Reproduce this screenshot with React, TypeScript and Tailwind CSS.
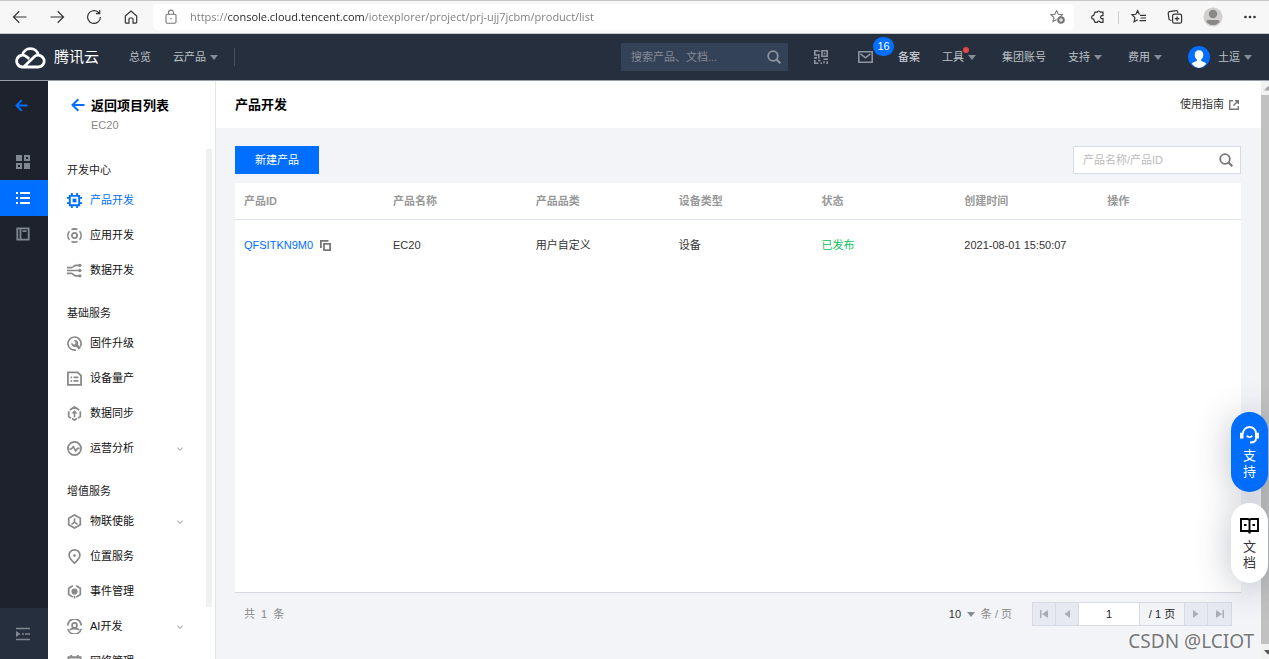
import React, { useState } from 'react';
import type { ReactNode } from 'react';

type IconProps = { className?: string };

const Svg = ({
  children,
  className = 'size-4',
  box = 16,
  width = 1.4,
}: IconProps & { children: ReactNode; box?: number; width?: number }) => (
  <svg
    viewBox={`0 0 ${box} ${box}`}
    className={`shrink-0 ${className}`}
    fill="none"
    stroke="currentColor"
    strokeWidth={width}
    aria-hidden="true"
  >
    {children}
  </svg>
);

const Caret = () => (
  <svg viewBox="0 0 8 5" className="h-[5px] w-2 shrink-0 text-[#868c96]" aria-hidden="true">
    <path d="M0 0h8L4 5z" fill="currentColor" />
  </svg>
);

const BackArrow = ({ className = 'size-[14px]' }: IconProps) => (
  <Svg className={className} box={14} width={2}>
    <path d="M13.5 7H1.8M7.3 1.2 1.5 7l5.8 5.8" />
  </Svg>
);

const SearchIcon = ({ className = 'size-[14px]' }: IconProps) => (
  <Svg className={className} box={14} width={1.8}>
    <circle cx="6" cy="6" r="4.8" />
    <path d="m9.3 9.3 4 4" strokeWidth="2.2" />
  </Svg>
);

/* ---------- browser toolbar ---------- */

const BrowserBar = () => {
  const [url, setUrl] = useState(
    'https://console.cloud.tencent.com/iotexplorer/project/prj-ujj7jcbm/product/list'
  );

  return (
    <div className="flex h-[34px] shrink-0 items-center border-y border-y-[#c8c8c8] bg-[#f7f7f7] pr-3 pl-3 text-[#333]">
      <div className="flex items-center gap-[21px]">
        <button aria-label="Back">
          <Svg width={1.2}>
            <path d="M14.5 8H1.7M7.3 2.3 1.5 8l5.800 5.700" />
          </Svg>
        </button>
        <button aria-label="Forward">
          <Svg width={1.2}>
            <path d="M1.500 8h12.800M8.700 2.300 14.500 8l-5.800 5.700" />
          </Svg>
        </button>
        <button aria-label="Refresh">
          <Svg width={1.2}>
            <path d="M14.400 8A6.400 6.400 0 1 1 12.200 3.200L13.500 4.400M13.700 1v3.600h-3.800" />
          </Svg>
        </button>
        <button aria-label="Home">
          <Svg width={1.2}>
            <path d="M2.300 7 8 2l5.700 5v6.200a.9.9 0 0 1-.9.9H10V10a1 1 0 0 0-1-1H7a1 1 0 0 0-1 1v4.100H3.200a.9.9 0 0 1-.9-.9z" />
          </Svg>
        </button>
      </div>
      <div className="ml-[14px] flex h-[26px] flex-1 items-center rounded-sm bg-white pr-2 pl-[10px] text-[#777]">
        <Svg width={1.1}>
          <rect x="3" y="5.200" width="10" height="9" rx="1.200" />
          <path d="M5.500 5.200V3.600a2.500 2.500 0 0 1 5 0v1.600" />
          <circle cx="8" cy="9.800" r=".8" fill="currentColor" stroke="none" />
        </Svg>
        <input
          aria-label="Address"
          value={url}
          onChange={(e) => setUrl(e.target.value)}
          className="ml-[11px] min-w-0 flex-1 bg-[linear-gradient(90deg,#7a7a7a_38px,#1f1f1f_38px,#1f1f1f_174px,#7a7a7a_174px)] bg-clip-text font-['Open_Sans',sans-serif] text-[11px] text-transparent outline-none"
        />
        <Svg width={1.1}>
          <path d="m6.600 1.500 1.700 3.800 4.100.4-2.600 2.600M4 8.400.9 5.700l4-.4L6.600 1.500M4 8.400l-.9 4 3.500-2" />
          <circle cx="11" cy="11" r="3.800" fill="currentColor" stroke="none" />
          <path d="M11 9v4M9 11h4" stroke="#fff" />
        </Svg>
      </div>
      <div className="ml-4 flex items-center">
        <button aria-label="Extensions">
          <Svg width={1.2}>
            <path d="M5 3.200h2.200a1.600 1.600 0 0 1 3.100 0H13v3.400h-1.200a1.600 1.600 0 0 0 0 3.100H13v3.600h-2.700a1.600 1.600 0 0 0-3.100 0H5l-1.400-3.100a1.900 1.900 0 0 1 0-3.800z" />
          </Svg>
        </button>
        <span className="ml-3 h-[13px] w-px bg-[#ccc]" />
        <button aria-label="Favorites" className="ml-3">
          <Svg width={1.2}>
            <path d="M8.500 5.600 6.600 1.700 4.900 5.300l-4 .5 3 2.800-.8 4.200 3.600-2M9 6.300h6M9.500 9h5.500M8.500 11.700H15" />
          </Svg>
        </button>
        <button aria-label="Collections" className="ml-5">
          <Svg width={1.2}>
            <path d="M4.500 11.500 2.900 11a1.600 1.600 0 0 1-1-2L1.200 4.500a1.600 1.600 0 0 1 1.300-1.800l6.300-1.100a1.600 1.600 0 0 1 1.900 1.300l.2 1" />
            <rect x="5.600" y="5.200" width="9" height="9" rx="1.800" />
            <path d="M10.100 7.400v4.600M7.800 9.700h4.600" />
          </Svg>
        </button>
        <button aria-label="Profile" className="ml-5">
          <Svg className="size-5" box={20}>
            <circle cx="10" cy="10" r="9.600" fill="#d2d0ce" stroke="none" />
            <circle cx="10" cy="7" r="4.200" fill="#8a8886" stroke="none" />
            <path d="M3.400 14.800c0-1.200.8-1.900 1.900-1.900h9.400c1.100 0 1.900.7 1.900 1.900a8.300 8.300 0 0 1-13.200 0z" fill="#8a8886" stroke="none" />
          </Svg>
        </button>
        <button aria-label="Settings" className="ml-5">
          <Svg className="size-[14px]" box={14}>
            <g fill="currentColor" stroke="none">
              <circle cx="2.500" cy="7" r="1.300" />
              <circle cx="7" cy="7" r="1.300" />
              <circle cx="11.500" cy="7" r="1.300" />
            </g>
          </Svg>
        </button>
      </div>
    </div>
  );
};

/* ---------- console header ---------- */

const TopNav = () => (
  <header className="flex h-[46px] shrink-0 items-center bg-[#262f3e] pr-[17px] pl-[15px] text-[#bbc0c6]">
    <a href="#" className="flex items-center gap-2 text-white">
      <svg
        viewBox="0 0 31 24"
        className="h-6 w-[31px]"
        fill="none"
        stroke="currentColor"
        strokeWidth="2.800"
        strokeLinejoin="round"
        aria-hidden="true"
      >
        <path d="M8 22h15.300a5.900 5.900 0 1 0-4.300-10L8.700 22H7.500a5.900 5.900 0 1 1 4-10.300l2.700 2.200M7.400 10.200a8.100 8.100 0 0 1 15.900-.1" />
      </svg>
      <span className="text-[15px]">腾讯云</span>
    </a>
    <nav className="ml-[30px] flex items-center gap-[22px]">
      <a href="#">总览</a>
      <button className="flex items-center gap-1">
        云产品
        <Caret />
      </button>
    </nav>
    <span className="ml-4 h-[18px] w-px bg-[#475060]" />
    <div className="ml-auto flex items-center gap-[22px]">
      <label className="mr-1 flex h-7 w-[167px] items-center bg-[#344258] pr-[7px] pl-[10px] text-[#8d949f]">
        <input
          aria-label="搜索"
          placeholder="搜索产品、文档..."
          className="min-w-0 flex-1 outline-none placeholder:text-[#858b95]"
        />
        <SearchIcon />
      </label>
      <button aria-label="二维码" className="mr-2 text-[#8d949f]">
        <Svg className="size-[14px]" box={14} width={1.6}>
          <path d="M4.500.8H.8V5h3M8 .8h5.200v5.400H8zM10.600 2.700v1.600M0 7.900h3M5.500.8v1M4.800 4v4.500M9.500 9.200H14M.8 10v3.200h3.700M4 10.500h2.500M6.500 13.200h1.500M10 13.200v-2M13.200 11.200V14" />
        </Svg>
      </button>
      <button aria-label="消息" className="relative text-[#8d949f]">
        <svg
          viewBox="0 0 15 12"
          className="h-3 w-[15px]"
          fill="none"
          stroke="currentColor"
          strokeWidth="1.600"
          aria-hidden="true"
        >
          <path d="M.8.800h13.400v10.400H.8zM2.500 2.800l5 4 5-4" />
        </svg>
        <span className="absolute -top-[14px] left-[15px] flex h-[19px] w-[21px] items-center justify-center rounded-full bg-[#006eff] text-[11px] text-white">
          16
        </span>
      </button>
      <a href="#" className="ml-[3px] text-[#d5d8dc]">
        备案
      </a>
      <button className="relative mr-1 flex items-center gap-1">
        工具
        <Caret />
        <span className="absolute -top-[2px] left-[21px] size-[6px] rounded-full bg-[#e54545]" />
      </button>
      <a href="#">集团账号</a>
      <button className="mr-1 flex items-center gap-1">
        支持
        <Caret />
      </button>
      <button className="mr-1 flex items-center gap-1">
        费用
        <Caret />
      </button>
      <button className="flex items-center gap-1">
        <svg viewBox="0 0 22 22" className="mr-1 size-[22px]" aria-hidden="true">
          <circle cx="11" cy="11" r="11" fill="#006eff" />
          <path
            d="M11 4.200c2.800 0 4.300 1.900 4.300 4.500 0 2.200-1 4-2.200 4.800v1.300l4.200 1.900a1.500 1.500 0 0 1 .8 1.200A11 11 0 0 1 11 22a11 11 0 0 1-7.100-4.100 1.500 1.500 0 0 1 .8-1.200l4.200-1.900v-1.300C7.700 12.700 6.700 10.900 6.700 8.700c0-2.600 1.500-4.500 4.300-4.500z"
            fill="#fff"
          />
        </svg>
        土逗
        <Caret />
      </button>
    </div>
  </header>
);

/* ---------- left rail ---------- */

const Rail = () => (
  <aside className="flex w-12 shrink-0 flex-col bg-[#1e222d] text-[#808791]">
    <button aria-label="返回" className="flex h-12 items-center justify-center pr-[5px] text-[#006eff]">
      <BackArrow className="size-[13px]" />
    </button>
    <nav className="mt-[15px] flex flex-1 flex-col">
      <a href="#" aria-label="概览" className="flex h-9 items-center justify-center pr-[2px]">
        <Svg className="size-[14px]" box={14} width={2}>
          <path d="M0 0h6v6H0zM8 8h6v6H8z" fill="currentColor" stroke="none" />
          <path d="M9 1h4v4H9zM1 9h4v4H1z" />
        </Svg>
      </a>
      <a href="#" aria-label="列表" className="flex h-9 items-center justify-center bg-[#006eff] pr-[2px] text-white">
        <Svg className="size-[14px]" box={14} width={1.8}>
          <path d="M0 2h2M4 2h10M0 7h2M4 7h10M0 12h2M4 12h10" />
        </Svg>
      </a>
      <a href="#" aria-label="文档" className="flex h-9 items-center justify-center pr-[2px]">
        <Svg className="size-[14px]" box={14} width={1.8}>
          <path d="M1.300 1.300h11.400v11.400H1.300zM4.500 1v12M6.500 4.200h4" />
        </Svg>
      </a>
    </nav>
    <button aria-label="展开" className="flex h-[51px] items-center justify-center bg-[#262f3e] pr-[2px]">
      <Svg className="size-[14px]" box={14} width={1.6}>
        <path d="M0 1.500h14M6 7h2M9 7h5M0 12.500h14" />
        <path d="M0 4l4.500 3L0 10z" fill="currentColor" stroke="none" />
      </Svg>
    </button>
  </aside>
);

/* ---------- side menu ---------- */

const hexagon = 'M8 1 14.200 4.500v7L8 15 1.800 11.500v-7z';

const icons: Record<string, ReactNode> = {
  chip: (
    <>
      <path d="M3 3h10v10H3z" strokeWidth="2" />
      <path d="M6 6h4v4H6z" fill="currentColor" stroke="none" />
      <path d="M5.200 0v3M10.800 0v3M5.200 13v3M10.800 13v3M0 5.200h3M0 10.800h3M13 5.200h3M13 10.800h3" strokeWidth="2" />
    </>
  ),
  app: (
    <>
      <circle cx="8" cy="8" r="2.800" strokeWidth="1.900" />
      <path d="M4.800 1.700a7 7 0 0 1 6.400 0M4.800 14.300a7 7 0 0 0 6.400 0M2.600 3.500a7 7 0 0 0 0 9M13.400 3.500a7 7 0 0 1 0 9" />
    </>
  ),
  flow: (
    <>
      <path d="M0 5h4.500C7 5 7 2.500 9.500 2.500h4M0 8h14M0 11h4.500c2.500 0 2.500 2.700 5 2.700h4" strokeWidth="1.800" />
      <g fill="currentColor" stroke="none">
        <circle cx="13.700" cy="2.500" r="1.800" />
        <circle cx="13.700" cy="8" r="1.800" />
        <circle cx="13.700" cy="13.700" r="1.800" />
      </g>
    </>
  ),
  wrench: (
    <>
      <path d="M9.500 14.900A7 7 0 1 1 15 8.600c-.1 1-.4 1.900-.8 2.700" />
      <path
        d="M7.300 4.500a3.600 3.600 0 0 1 4.500 4.800l3 3.200-2 2-3.200-3.100a3.600 3.600 0 0 1-4.800-4.600L7 9l1.900-.3.200-1.900z"
        fill="currentColor"
        stroke="none"
      />
    </>
  ),
  sheet: (
    <>
      <path d="M1 1.500h10.500L15 5v9.700H1z" strokeWidth="1.900" />
      <path d="M3.800 6.800h1.700M7 6.800h5.200M3.800 10.500h1.700M7 10.500h5.200" strokeWidth="1.800" />
    </>
  ),
  sync: (
    <>
      <path d="M3 4.300 8 1l5 3.300M1.800 5.500v5.700L4.300 13M14.200 5.500v5.700L11.700 13M5.300 13.300 8 15l2.700-1.700" strokeWidth="1.800" />
      <path d="M8 12V7" strokeWidth="1.800" />
      <path d="M4.800 8 8 4.300 11.200 8z" fill="currentColor" stroke="none" />
    </>
  ),
  pulse: (
    <>
      <circle cx="8" cy="8" r="7" />
      <path d="M2.500 8.500h2L6.700 6l2.600 4.500 2-2.700h2.200" strokeWidth="1.800" />
    </>
  ),
  hex: (
    <>
      <path d={hexagon} />
      <path d="M8 4.500v4.200L4.800 11M8 8.700l3.200 2.300" strokeWidth="1.700" />
    </>
  ),
  pin: (
    <>
      <path d="M8 15.200C5 12.400 2.200 9.800 2.200 6.700a5.800 5.800 0 0 1 11.600 0c0 3.100-2.800 5.700-5.800 8.500z" />
      <circle cx="8" cy="7" r="1.400" fill="currentColor" stroke="none" />
    </>
  ),
  event: (
    <>
      <path d="M6.200 1.800 1.800 4.500v6.700L6.200 14M9.800 1.800l4.400 2.700v6.700L9.800 14" strokeWidth="1.800" />
      <circle cx="8" cy="8" r="3.300" fill="currentColor" stroke="none" />
      <path d="M8 12.500v3" />
    </>
  ),
  ai: (
    <>
      <circle cx="8" cy="6.800" r="2.600" />
      <path d="M.8 7a7.200 7.200 0 0 1 14.400 0M1 10.500a7.200 7.200 0 0 0 14 0M3 11.500c2.500-1.700 7.500-1.700 10 0" />
    </>
  ),
  net: (
    <>
      <path d="M1.500 3.500h13v11h-13z" strokeWidth="2" />
      <path d="M4.500 1v3M11.500 1v3M2 6h12" strokeWidth="2" />
    </>
  ),
};

type MenuItem = { label: string; icon: string; more?: boolean; active?: boolean };

const menu: { title: string; items: MenuItem[] }[] = [
  {
    title: '开发中心',
    items: [
      { label: '产品开发', icon: 'chip', active: true },
      { label: '应用开发', icon: 'app' },
      { label: '数据开发', icon: 'flow' },
    ],
  },
  {
    title: '基础服务',
    items: [
      { label: '固件升级', icon: 'wrench' },
      { label: '设备量产', icon: 'sheet' },
      { label: '数据同步', icon: 'sync' },
      { label: '运营分析', icon: 'pulse', more: true },
    ],
  },
  {
    title: '增值服务',
    items: [
      { label: '物联使能', icon: 'hex', more: true },
      { label: '位置服务', icon: 'pin' },
      { label: '事件管理', icon: 'event' },
      { label: 'AI开发', icon: 'ai', more: true },
      { label: '网络管理', icon: 'net' },
    ],
  },
];

const SideMenu = () => (
  <aside className="flex w-[168px] shrink-0 flex-col border-r border-[#e3e6ec] bg-white">
    <div className="flex h-[68px] shrink-0 gap-[6px] pt-4 pl-[23px]">
      <a href="#" aria-label="返回项目列表" className="mt-px h-[14px] text-[#006eff]">
        <BackArrow />
      </a>
      <div>
        <h2 className="text-[13px] leading-[18px] font-bold text-black">返回项目列表</h2>
        <p className="leading-5 text-[#888]">EC20</p>
      </div>
    </div>
    <div className="flex min-h-0 flex-1">
      <nav className="flex-1 overflow-hidden pt-2">
        {menu.map((group) => (
          <section key={group.title} className="mb-3">
            <h3 className="pl-[19px] leading-[26px] text-[#222]">{group.title}</h3>
            {group.items.map((item) => (
              <a
                key={item.label}
                href="#"
                className={`flex h-[35px] items-center gap-2 pr-[23px] pl-[19px] ${
                  item.active ? 'text-[#006eff]' : 'text-[#111]'
                }`}
              >
                <span className={item.active ? '' : 'text-[#888]'}>
                  <Svg className="size-[15px]" width={1.8}>
                    {icons[item.icon]}
                  </Svg>
                </span>
                {item.label}
                {item.more && (
                  <Svg className="ml-auto size-[6px] text-[#aaa]" box={7} width={1.2}>
                    <path d="M.5 2l3 3 3-3" />
                  </Svg>
                )}
              </a>
            ))}
          </section>
        ))}
      </nav>
      <div className="mr-[3px] mb-[52px] w-[6px] bg-[#f0f0f0]" />
    </div>
  </aside>
);

/* ---------- main content ---------- */

const columns = ['产品ID', '产品名称', '产品品类', '设备类型', '状态', '创建时间', '操作'];

const products = [
  {
    id: 'QFSITKN9M0',
    name: 'EC20',
    category: '用户自定义',
    type: '设备',
    status: '已发布',
    created: '2021-08-01 15:50:07',
  },
];

const ProductTable = () => (
  <div className="flex-1 border-b border-[#d5d9e2] bg-white">
    <table className="w-full table-fixed text-left text-[#333]">
      <thead>
        <tr className="h-9 border-b border-[#dfe3ea] text-[#999]">
          {columns.map((c) => (
            <th key={c} className="px-[9px] font-bold first:w-[149px]">
              {c}
            </th>
          ))}
        </tr>
      </thead>
      <tbody>
        {products.map((p) => (
          <tr key={p.id} className="h-[52px]">
            <td className="px-[9px]">
              <div className="flex items-center gap-[7px]">
                <a href="#" className="text-[#006eff]">
                  {p.id}
                </a>
                <button aria-label="复制" className="text-[#777]">
                  <Svg className="size-[11px]" box={11} width={1.8}>
                    <path d="M4 3.800h6.100v6.300H4zM.9 8V.9H8.500" />
                  </Svg>
                </button>
              </div>
            </td>
            <td className="px-[9px]">{p.name}</td>
            <td className="px-[9px]">{p.category}</td>
            <td className="px-[9px]">{p.type}</td>
            <td className="px-[9px] text-[#0abf5b]">{p.status}</td>
            <td className="px-[9px]">{p.created}</td>
            <td className="px-[9px]" />
          </tr>
        ))}
      </tbody>
    </table>
  </div>
);

const PageButton = ({ label, d }: { label: string; d: string }) => (
  <button
    aria-label={label}
    className="flex w-[23px] items-center justify-center border-r border-[#d5dae4] bg-[#e6e9ef] text-[#a9adb5] last:border-r-0"
  >
    <svg viewBox="0 0 8 8" className="size-2" aria-hidden="true">
      <path d={d} fill="currentColor" />
    </svg>
  </button>
);

const Pagination = () => {
  const [page, setPage] = useState('1');

  return (
    <footer className="flex h-[42px] items-center px-[9px] text-[#888]">
      <p>共&nbsp; 1 &nbsp;条</p>
      <label className="ml-auto flex items-center gap-[6px]">
        <span className="flex items-center gap-1">
          <select aria-label="每页条数" className="w-[14px] appearance-none text-[#333]">
            <option>10</option>
          </select>
          <Caret />
        </span>
        条 / 页
      </label>
      <div className="ml-5 flex h-6 border border-[#d5dae4]">
        <PageButton label="首页" d="M0 0h1.500v8H0zM8 0v8L2 4z" />
        <PageButton label="上一页" d="M7 0v8L1.500 4z" />
        <input
          aria-label="页码"
          value={page}
          onChange={(e) => setPage(e.target.value)}
          className="w-[60px] bg-white text-center text-[#222] outline-none"
        />
        <span className="flex w-[46px] items-center justify-center border-x border-[#d5dae4] text-[#222]">
          / 1 页
        </span>
        <PageButton label="下一页" d="M1 0v8l5.500-4z" />
        <PageButton label="末页" d="M6.500 0H8v8H6.500zM0 0v8l6-4z" />
      </div>
    </footer>
  );
};

const Content = () => (
  <main className="flex min-w-0 flex-1 flex-col bg-[#f2f4f8]">
    <div className="flex h-[47px] shrink-0 items-center justify-between bg-white pr-[22px] pl-[19px]">
      <h1 className="text-[13px] font-bold text-black">产品开发</h1>
      <a href="#" className="flex items-center gap-[5px] text-[#333]">
        使用指南
        <Svg className="size-[10px] text-[#777]" box={10} width={1.5}>
          <path d="M4 .7H.7v8.600h8.600V6M6 .7h3.300V4M9.300.7 4.500 5.500" />
        </Svg>
      </a>
    </div>
    <div className="flex flex-1 flex-col pt-[18px] pr-5 pb-6 pl-[19px]">
      <div className="mb-[9px] flex items-center justify-between">
        <button className="h-7 w-[84px] bg-[#006eff] text-white">新建产品</button>
        <label className="flex h-7 w-[168px] items-center border border-[#d5dce8] bg-white pr-[7px] pl-[9px] text-[#777]">
          <input
            aria-label="产品名称/产品ID"
            placeholder="产品名称/产品ID"
            className="min-w-0 flex-1 text-[#333] outline-none placeholder:text-[#bbb]"
          />
          <SearchIcon />
        </label>
      </div>
      <ProductTable />
      <Pagination />
    </div>
  </main>
);

const ScrollTrack = () => (
  <div className="flex w-2 shrink-0 flex-col items-end bg-[#f1f1f1] text-[#555]">
    <svg viewBox="0 0 5 14" className="h-[14px] w-[5px]" aria-hidden="true">
      <path d="M0 9.500 4 5l1 1v3.500z" fill="#a3a3a3" />
    </svg>
    <div className="w-full flex-1 bg-[#c1c1c1]" />
    <svg viewBox="0 0 5 15" className="h-[15px] w-[5px]" aria-hidden="true">
      <path d="M0 6h5v3.500L4 10.500z" fill="currentColor" />
    </svg>
  </div>
);

const FloatingHelp = () => (
  <div className="absolute right-px bottom-[76px] flex flex-col gap-[11px] text-[13px] leading-4">
    <button className="flex h-20 w-[37px] flex-col items-center rounded-full bg-[#006eff] pt-[13px] text-white shadow-[0_4px_36px_rgba(54,58,80,0.32)]">
      <Svg className="mb-1 size-[19px]" box={19} width={1.9}>
        <path d="M3 8.500a6.500 6.500 0 0 1 13 0v5c0 2.500-2 4-6 4M6.800 10.800c1.200 1.800 4.200 1.800 5.400 0" />
        <path d="M0 7.800h3.500v5.700H0zM15.500 7.800H19v5.700h-3.500z" fill="currentColor" stroke="none" />
      </Svg>
      <span>支</span>
      <span>持</span>
    </button>
    <button className="flex h-20 w-[37px] flex-col items-center rounded-full bg-white pt-[13px] text-[#333] shadow-[0_4px_36px_rgba(54,58,80,0.32)]">
      <Svg className="mb-1 size-[19px] text-black" box={19} width={1.9}>
        <path d="M1 3h6.500c1.200 0 2 .8 2 1.800 0-1 .8-1.800 2-1.800H18v12h-6c-1.500 0-2.500.6-2.500 1.700 0-1.100-1-1.700-2.500-1.700H1zM9.500 4.500v13M4 9h2.500M12.500 9H15" />
      </Svg>
      <span>文</span>
      <span>档</span>
    </button>
  </div>
);

const App = () => (
  <div className="relative flex h-screen flex-col overflow-hidden font-['Liberation_Sans','Noto_Sans_CJK_SC',sans-serif] text-[11px]">
    <BrowserBar />
    <TopNav />
    <div className="flex min-h-0 flex-1 border-t border-[#9a9ea8]">
      <Rail />
      <SideMenu />
      <Content />
      <ScrollTrack />
    </div>
    <FloatingHelp />
    <p className="absolute right-[15px] bottom-1 font-['Noto_Sans',sans-serif] text-[19px] leading-7 text-[#777] [text-shadow:-1px_-1px_0_#fff]">
      CSDN @LCIOT
    </p>
  </div>
);

export default App;
